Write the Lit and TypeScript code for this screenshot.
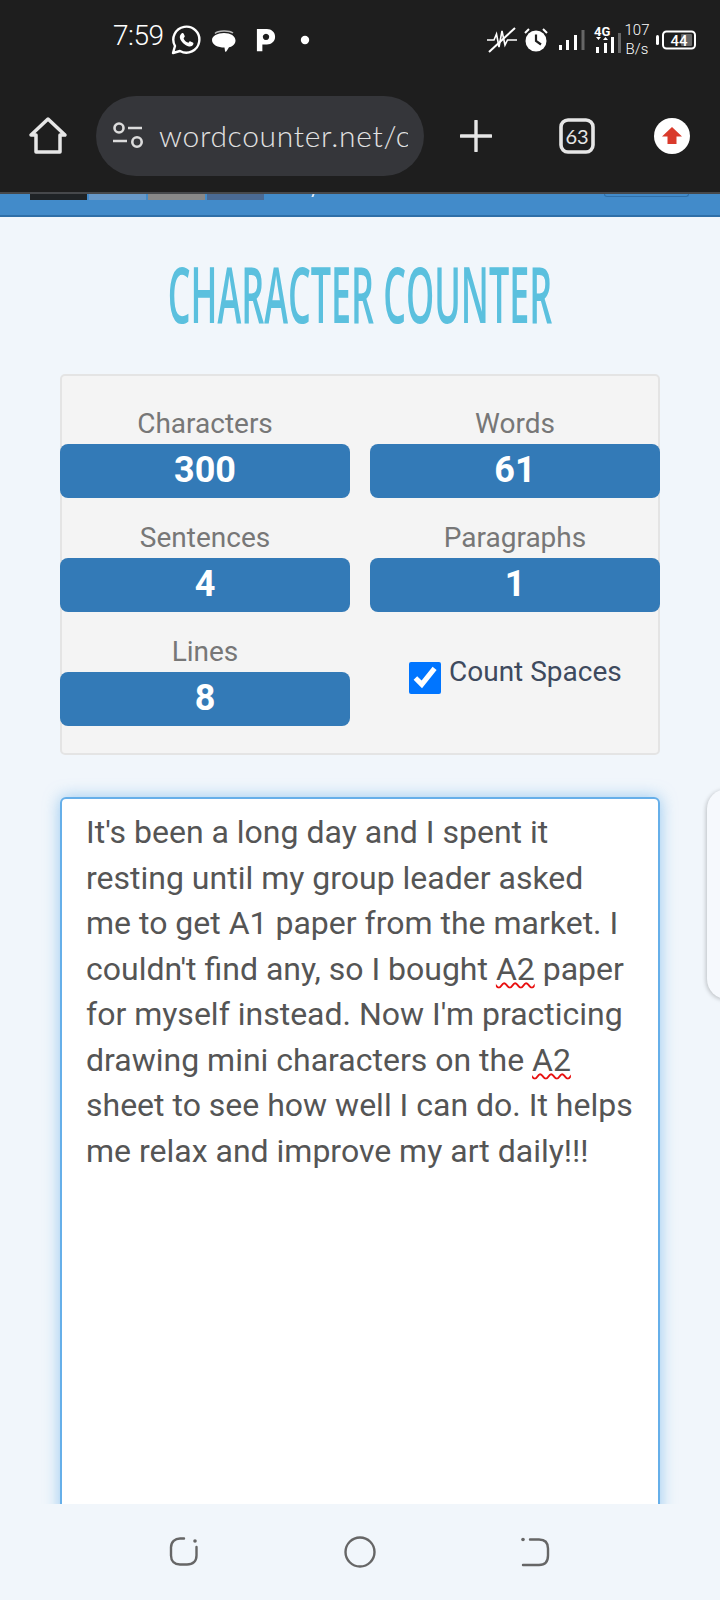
import { LitElement, html, css } from 'lit';
import { customElement } from 'lit/decorators.js';

const stats = [
  { label: 'Characters', value: '300' },
  { label: 'Words', value: '61' },
  { label: 'Sentences', value: '4' },
  { label: 'Paragraphs', value: '1' },
  { label: 'Lines', value: '8' },
];

@customElement('app-root')
export class AppRoot extends LitElement {

  static styles = css`
    :host{
      display:block;
      width:720px;
      height:1600px;
      overflow:hidden;
      font-family:Roboto,"Liberation Sans",sans-serif;
      background:#f1f6fb;
    }
    .page{
      height:1600px;
      display:flex;
      flex-direction:column;
    }
    .top{
      background:#1e1e1e;
      height:192px;
      flex:none;
    }
    .status{
      height:96px;
      display:flex;
      align-items:center;
      padding:0 24px 16px 113px;
      box-sizing:border-box;
      color:#fff;
    }
    .time{
      font-size:28px;
      font-weight:300;
      letter-spacing:-0.5px;
      margin-top:-10px;
      width:58px;
    }
    .status svg{
      display:block;
      flex:none;
    }
    .spacer{
      flex:1;
    }
    .speed{
      font-size:15px;
      font-weight:300;
      line-height:19px;
      text-align:center;
      width:26px;
      margin:0 6px 0 3px;
    }
    .toolbar{
      height:96px;
      display:flex;
      align-items:center;
      padding:0 0 16px 28px;
      box-sizing:border-box;
    }
    .toolbar svg{
      display:block;
      flex:none;
    }
    .pill{
      width:328px;
      height:80px;
      margin-left:28px;
      flex:none;
      border-radius:40px;
      background:#35363a;
      display:flex;
      align-items:center;
      padding:0 16px 0 16px;
      box-sizing:border-box;
      gap:15px;
    }
    .url{
      font-family:Lato,"Open Sans",sans-serif;
      font-size:30px;
      line-height:36px;
      font-weight:300;
      color:#e2e2e2;
      white-space:nowrap;
      overflow:hidden;
      flex:1;
      letter-spacing:0.7px;
      margin-top:-2px;
    }
    .strip{
      flex:none;
      height:21px;
      background:#428bca;
      border-top:2px solid #46484b;
      border-bottom:2px solid #2f6fa8;
      display:flex;
      align-items:flex-start;
      padding-left:30px;
      gap:2px;
      overflow:hidden;
    }
    .strip i{
      display:block;
      width:57px;
      height:6px;
    }
    .strip .tick{
      width:2px;
      height:3px;
      margin-left:46px;
      background:#dce9f5;
      transform:skewX(-20deg);
    }
    .strip .btn-edge{
      width:83px;
      height:2px;
      margin-left:288px;
      border:1px solid #2f6fa8;
      border-top:0;
      border-radius:0 0 6px 6px;
    }
    main{
      flex:1;
      min-height:0;
      overflow:hidden;
      position:relative;
      padding:36px 60px 0;
      box-sizing:border-box;
    }
    h1{
      margin:0 0 41px;
      height:80px;
      line-height:80px;
      display:flex;
      justify-content:center;
      font-family:"Open Sans",sans-serif;
      font-size:78px;
      font-weight:600;
      color:#5bc0de;
      white-space:nowrap;
      transform:scaleX(0.46);
    }
    .panel{
      box-sizing:border-box;
      height:381px;
      width:600px;
      background:#f4f4f4;
      border:2px solid #e4e4e4;
      border-radius:5px;
      padding-top:32px;
      display:grid;
      grid-template-columns:290px 290px;
      column-gap:20px;
      row-gap:24px;
      align-content:start;
    }
    .stat{
      margin-left:-2px;
      margin-right:2px;
    }
    .stat-label{
      height:36px;
      line-height:32px;
      font-size:28px;
      color:#777;
      text-align:center;
    }
    .stat-value{
      height:54px;
      line-height:52px;
      border-radius:8px;
      background:#337ab7;
      color:#fff;
      font-size:36px;
      font-weight:700;
      text-align:center;
    }
    .check{
      display:flex;
      align-items:flex-start;
      gap:8px;
      padding:26px 0 0 39px;
      margin-left:-2px;
      font-size:28px;
      line-height:32px;
      color:#3e4a5e;
    }
    .check input{
      width:32px;
      height:32px;
      margin:0;
      flex:none;
      accent-color:#0075ff;
    }
    .check span{
      margin-top:-6px;
    }
    .editor{
      margin-top:42px;
      box-sizing:border-box;
      width:600px;
      height:800px;
      background:#fff;
      border:2px solid #66afe9;
      border-radius:6px;
      box-shadow:0 0 16px rgba(102,175,233,.65);
      padding:11px 22px 0 24px;
      font-size:32px;
      line-height:45.5px;
      color:#555;
    }
    .editor u{
      text-decoration:underline wavy #e81010 2px;
      text-underline-offset:2px;
    }
    .side{
      position:absolute;
      top:572px;
      left:707px;
      width:40px;
      height:210px;
      border-radius:24px;
      background:#f6f9fd;
      box-shadow:-1px 1px 4px rgba(0,0,0,.22);
    }
    nav{
      flex:none;
      height:96px;
      background:#f1f6fb;
      display:flex;
      align-items:center;
      justify-content:center;
      gap:144px;
      position:relative;
    }
    nav svg{
      display:block;
    }
  `;

  render() {
    return html`
      <div class="page">
        <div class="top">
          <div class="status">
            <div class="time">7:59</div>
            ${this.statusLeft()}
            <div class="spacer"></div>
            ${this.statusRight()}
          </div>
          <div class="toolbar">
            <svg width="40" height="40" viewBox="0 0 40 40" fill="none" stroke="#e6e6e6" stroke-width="3.5" stroke-linejoin="round" stroke-linecap="round">
              <path d="M3 19 20 3l17 16h-5v17H8V19z"/>
            </svg>
            <div class="pill">
              <svg width="32" height="28" viewBox="0 0 32 28" fill="none" stroke="#dcdcdc" stroke-width="2.6">
                <circle cx="7" cy="6" r="4.5"/>
                <path d="M16 6h14M1 19h14"/>
                <circle cx="25" cy="20" r="4.7"/>
              </svg>
              <div class="url">wordcounter.net/c</div>
            </div>
            <svg style="margin-left:36px" width="32" height="32" viewBox="0 0 32 32" stroke="#e6e6e6" stroke-width="3.4" stroke-linecap="round">
              <path d="M16 1v30M1 16h30"/>
            </svg>
            <svg style="margin-left:67px" width="36" height="36" viewBox="0 0 36 36">
              <rect x="2" y="2" width="32" height="32" rx="7" fill="none" stroke="#e6e6e6" stroke-width="3.6"/>
              <text x="18" y="25.5" text-anchor="middle" font-family="Lato,sans-serif" font-size="20" fill="#e6e6e6">63</text>
            </svg>
            <svg style="margin-left:59px" width="36" height="36" viewBox="0 0 36 36">
              <circle cx="18" cy="18" r="18" fill="#fff"/>
              <path d="M18 9 28 18.500h-5.500V26h-9v-7.500H8z" fill="#d93a2b"/>
            </svg>
          </div>
        </div>
        <div class="strip">
          <i style="background:#1f2326"></i>
          <i style="background:#6798c8"></i>
          <i style="background:#888888"></i>
          <i style="background:#4a6a94"></i>
          <i class="tick"></i>
          <i class="btn-edge"></i>
        </div>
        <main>
          <h1><span>CHARACTER COUNTER</span></h1>
          <div class="panel">
            ${stats.map(s => html`
              <div class="stat">
                <div class="stat-label">${s.label}</div>
                <div class="stat-value">${s.value}</div>
              </div>
            `)}
            <label class="check">
              <input type="checkbox" checked>
              <span>Count Spaces</span>
            </label>
          </div>
          <div class="editor">It's been a long day and I spent it resting until my group leader asked me to get A1 paper from the market. I couldn't find any, so I bought <u>A2</u> paper for myself instead. Now I'm practicing drawing mini characters on the <u>A2</u> sheet to see how well I can do. It helps me relax and improve my art daily!!!</div>
          <div class="side"></div>
        </main>
        <nav>
          <svg width="32" height="32" viewBox="0 0 32 32" fill="none" stroke="#666" stroke-width="2.4" stroke-linecap="round">
            <path d="M16 2.500h-4c-5 0-9 3.500-9 9v8c0 5.500 3.500 9 9 9h7c6 0 9.500-3.500 9.500-9V11"/>
            <circle cx="27" cy="5" r="1.800" fill="#666" stroke="none"/>
          </svg>
          <svg width="32" height="32" viewBox="0 0 32 32" fill="none" stroke="#666" stroke-width="2.4">
            <circle cx="16" cy="16" r="14.500"/>
          </svg>
          <svg width="32" height="32" viewBox="0 0 32 32" fill="none" stroke="#666" stroke-width="2.400" stroke-linecap="round">
            <path d="M10 3.500h9c6 0 9 3 9 9v7c0 6-3 9.500-9 9.500H3"/>
            <circle cx="3" cy="3.500" r="1.800" fill="#666" stroke="none"/>
          </svg>
        </nav>
      </div>
    `;
  }

  statusLeft() {
    return html`
      <svg width="30" height="30" viewBox="0 0 30 30" fill="none" stroke="#fff" stroke-width="2.4" stroke-linejoin="round">
        <path d="M2 28l2-7a13 13 0 1 1 5 5z"/>
        <path fill="#fff" stroke="none" d="M10.500 8.500c1-.7 1.800-.6 2.200.3l1 2.300c.2.500 0 1-.9 2-.2.300-.2.500 0 .8 1 1.700 2.200 2.800 4 3.700.4.200.600.100.9-.2.900-1.100 1.200-1.300 1.800-1l2.300 1.100c.7.400.8.900.400 2-.6 1.500-2.400 2.300-4.200 1.900-4.300-1-8.100-4.700-9.100-8.500-.3-1.300.4-3.300 1.600-4.400z"/>
      </svg>
      <svg style="margin-left:10px" width="26" height="26" viewBox="0 0 26 26">
        <path fill="#fff" d="M13 6c6.500 0 11.500 3 11.500 7.500 0 3.800-3 6-6.500 6.800l-2.500 4c-.6.800-1.400.5-1.500-.4l-.5-3.400C7 20.500 1 18 1 13 1 9 6.500 6 13 6z"/>
        <path fill="none" stroke="#bbb" stroke-width="1.500" d="M4 6.500C7 3.500 18 3 22 6"/>
      </svg>
      <svg style="margin-left:19px" width="20" height="24" viewBox="0 0 22 26">
        <path fill="#fff" fill-rule="evenodd" d="M1 1h11c5 0 9 3.500 9 8.500S17 18 12 18H7v7.500H1zM11 6a3.500 3.500 0 1 0 .01 0z"/>
      </svg>
      <svg style="margin-left:24px" width="10" height="10" viewBox="0 0 10 10">
        <circle cx="5" cy="5" r="4.200" fill="#fff"/>
      </svg>
    `;
  }

  statusRight() {
    return html`
      <svg width="30" height="28" viewBox="0 0 30 28" fill="none" stroke="#fff" stroke-width="1.600">
        <path d="M0 14h7l2.500-6 2.500 13 3-16 3 14 2.500-5h9.500"/>
        <path d="M2 26 28 2" stroke-width="2"/>
      </svg>
      <svg style="margin-left:7px" width="24" height="26" viewBox="0 0 24 26">
        <circle cx="12" cy="14" r="10.500" fill="#fff"/>
        <path d="M12 7.500V14l5 3.500" fill="none" stroke="#1e1e1e" stroke-width="2.200"/>
        <path d="M1 6l4-4M23 6l-4-4" stroke="#fff" stroke-width="2"/>
      </svg>
      <svg style="margin-left:11px" width="26" height="22" viewBox="0 0 26 22">
        <rect x="0" y="16" width="3" height="5" fill="#fff"/>
        <rect x="7" y="11" width="3" height="10" fill="#fff"/>
        <rect x="15" y="6" width="3" height="15" fill="#fff"/>
        <rect x="22.500" y="1" width="3" height="20" fill="#666"/>
      </svg>
      <svg style="margin-left:8px" width="28" height="30" viewBox="0 0 28 30">
        <text x="1" y="10.500" font-family="Roboto,sans-serif" font-weight="700" font-size="13" fill="#fff">4G</text>
        <path d="M3 12h5l-2.500 3zM10 15h5l-2.500-3z" fill="#fff"/>
        <rect x="3" y="22" width="3" height="6" fill="#fff"/>
        <rect x="11" y="18" width="3" height="10" fill="#fff"/>
        <rect x="18" y="12" width="3" height="16" fill="#fff"/>
        <rect x="25" y="8" width="3" height="20" fill="#666"/>
      </svg>
      <div class="speed">107<br>B/s</div>
      <svg width="40" height="20" viewBox="0 0 40 20">
        <rect x="0" y="5" width="3" height="10" rx="1.500" fill="#fff"/>
        <rect x="7" y="1.500" width="32" height="17" rx="3.500" fill="none" stroke="#fff" stroke-width="2"/>
        <rect x="25" y="4" width="11" height="12" rx="1" fill="#666"/>
        <text x="23" y="16" text-anchor="middle" font-family="Roboto,sans-serif" font-weight="500" font-size="15" fill="#fff">44</text>
      </svg>
    `;
  }

}
